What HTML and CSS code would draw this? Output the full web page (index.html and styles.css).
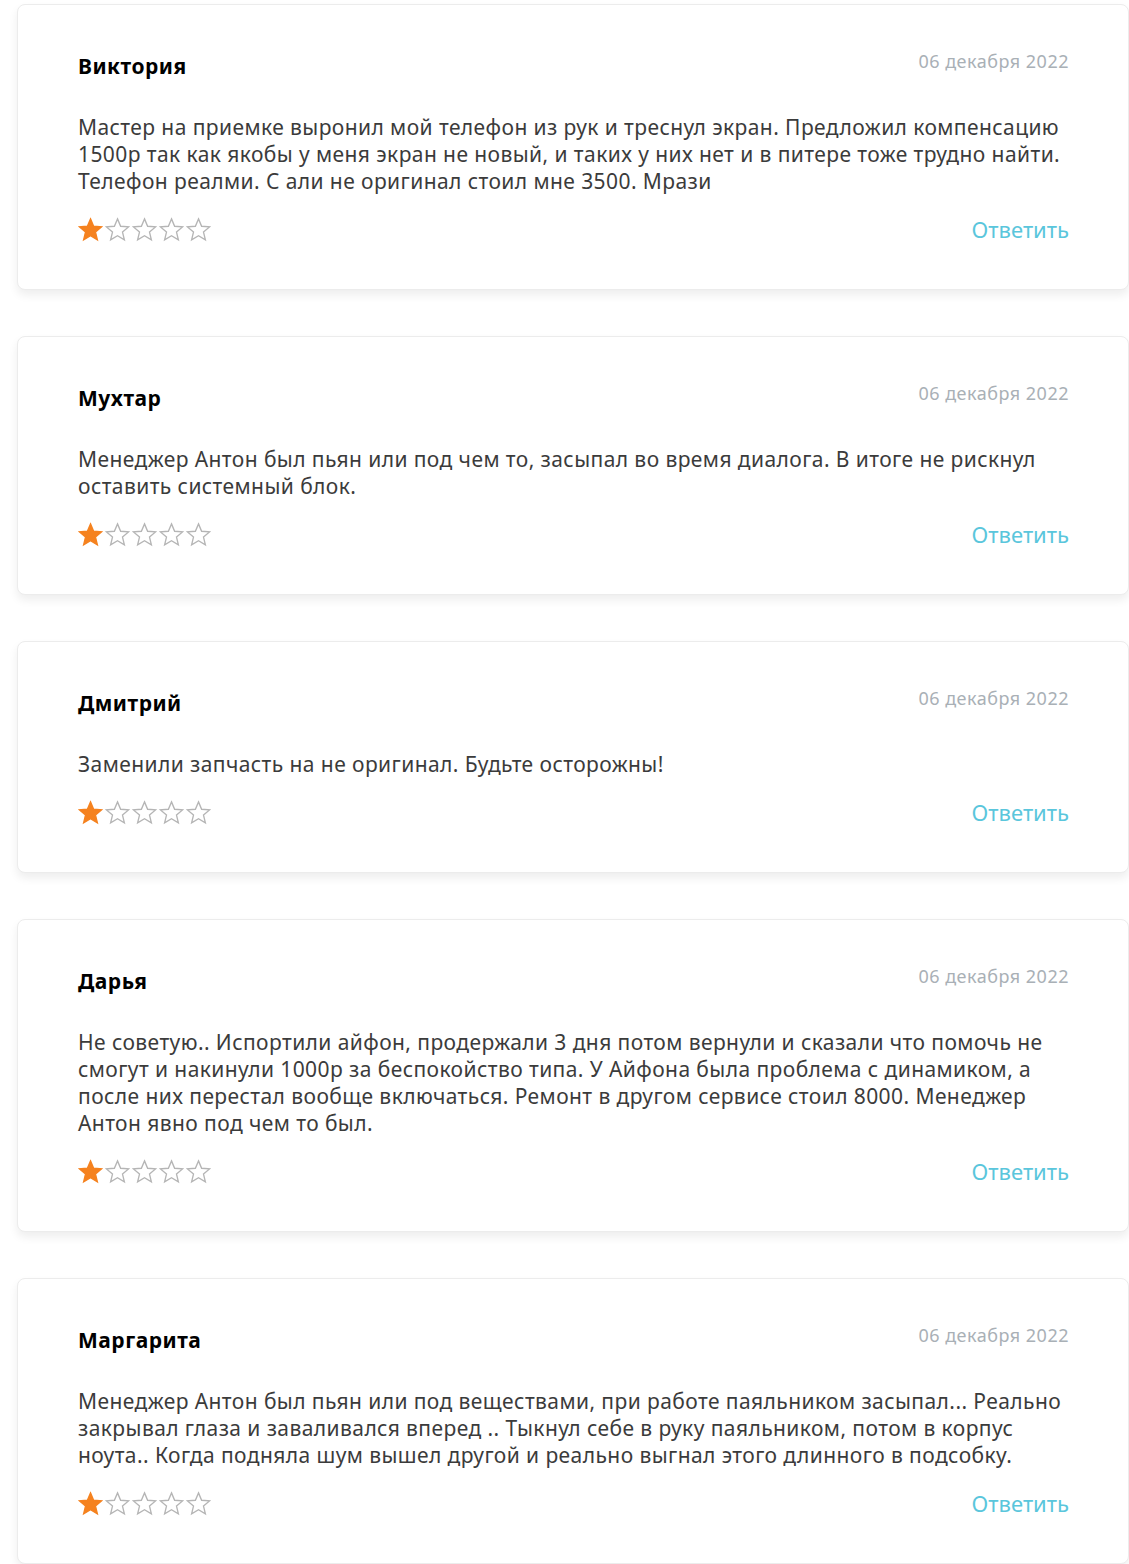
FILE: index.html
```html
<!DOCTYPE html>
<html lang="ru">
<head>
<meta charset="utf-8">
<title>Отзывы</title>
<link rel="stylesheet" href="styles.css">
</head>
<body>
<svg width="0" height="0" class="defs" aria-hidden="true">
  <defs>
    <symbol id="star" viewBox="0 0 24 24">
      <path d="M12 1.8l3 7.1 7.6.6-5.8 5 1.8 7.5L12 18l-6.6 4 1.8-7.5-5.8-5 7.6-.6z"/>
    </symbol>
  </defs>
</svg>
<div class="reviews">
  <article class="review">
    <div class="review-head"><span class="name">Виктория</span><span class="date">06 декабря 2022</span></div>
    <p class="text">Мастер на приемке выронил мой телефон из рук и треснул экран. Предложил компенсацию 1500р так как якобы у меня экран не новый, и таких у них нет и в питере тоже трудно найти. Телефон реалми. С али не оригинал стоил мне 3500. Мрази</p>
    <div class="review-foot">
      <div class="stars"><svg class="star on"><use href="#star"/></svg><svg class="star"><use href="#star"/></svg><svg class="star"><use href="#star"/></svg><svg class="star"><use href="#star"/></svg><svg class="star"><use href="#star"/></svg></div>
      <a class="reply" href="#">Ответить</a>
    </div>
  </article>
  <article class="review">
    <div class="review-head"><span class="name">Мухтар</span><span class="date">06 декабря 2022</span></div>
    <p class="text">Менеджер Антон был пьян или под чем то, засыпал во время диалога. В итоге не рискнул оставить системный блок.</p>
    <div class="review-foot">
      <div class="stars"><svg class="star on"><use href="#star"/></svg><svg class="star"><use href="#star"/></svg><svg class="star"><use href="#star"/></svg><svg class="star"><use href="#star"/></svg><svg class="star"><use href="#star"/></svg></div>
      <a class="reply" href="#">Ответить</a>
    </div>
  </article>
  <article class="review">
    <div class="review-head"><span class="name">Дмитрий</span><span class="date">06 декабря 2022</span></div>
    <p class="text">Заменили запчасть на не оригинал. Будьте осторожны!</p>
    <div class="review-foot">
      <div class="stars"><svg class="star on"><use href="#star"/></svg><svg class="star"><use href="#star"/></svg><svg class="star"><use href="#star"/></svg><svg class="star"><use href="#star"/></svg><svg class="star"><use href="#star"/></svg></div>
      <a class="reply" href="#">Ответить</a>
    </div>
  </article>
  <article class="review">
    <div class="review-head"><span class="name">Дарья</span><span class="date">06 декабря 2022</span></div>
    <p class="text">Не советую.. Испортили айфон, продержали 3 дня потом вернули и сказали что помочь не смогут и накинули 1000р за беспокойство типа. У Айфона была проблема с динамиком, а после них перестал вообще включаться. Ремонт в другом сервисе стоил 8000. Менеджер Антон явно под чем то был.</p>
    <div class="review-foot">
      <div class="stars"><svg class="star on"><use href="#star"/></svg><svg class="star"><use href="#star"/></svg><svg class="star"><use href="#star"/></svg><svg class="star"><use href="#star"/></svg><svg class="star"><use href="#star"/></svg></div>
      <a class="reply" href="#">Ответить</a>
    </div>
  </article>
  <article class="review">
    <div class="review-head"><span class="name">Маргарита</span><span class="date">06 декабря 2022</span></div>
    <p class="text">Менеджер Антон был пьян или под веществами, при работе паяльником засыпал... Реально закрывал глаза и заваливался вперед .. Тыкнул себе в руку паяльником, потом в корпус ноута.. Когда подняла шум вышел другой и реально выгнал этого длинного в подсобку.</p>
    <div class="review-foot">
      <div class="stars"><svg class="star on"><use href="#star"/></svg><svg class="star"><use href="#star"/></svg><svg class="star"><use href="#star"/></svg><svg class="star"><use href="#star"/></svg><svg class="star"><use href="#star"/></svg></div>
      <a class="reply" href="#">Ответить</a>
    </div>
  </article>
</div>
</body>
</html>
```
FILE: styles.css
```css
html, body {
  margin: 0;
  padding: 0;
  background: #fff;
  overflow: hidden;
}
body {
  font-family: "Noto Sans", "Open Sans", sans-serif;
  color: #3a3a3a;
}
.defs {
  position: absolute;
  width: 0;
  height: 0;
}
.reviews {
  display: flex;
  flex-direction: column;
  gap: 46px;
  padding: 4px 0 40px 17px;
}
.review {
  width: 1112px;
  box-sizing: border-box;
  background: #fff;
  border: 1px solid #ececec;
  border-radius: 8px;
  box-shadow: 0 5px 10px rgba(0, 0, 0, 0.07);
  padding: 44px 59px 46px 60px;
}
.review-head {
  display: flex;
  justify-content: space-between;
  align-items: flex-start;
}
.name {
  font-weight: 700;
  font-size: 21px;
  letter-spacing: 0.5px;
  line-height: 24px;
  color: #000;
  padding-top: 5px;
}
.date {
  font-size: 18px;
  letter-spacing: 0.5px;
  line-height: 24px;
  color: #a9b0b6;
}
.text {
  margin: 36px 0 0;
  font-size: 21px;
  letter-spacing: 0.42px;
  line-height: 27px;
  color: #3b3b3b;
}
.review-foot {
  margin-top: 20px;
  display: flex;
  justify-content: space-between;
  align-items: center;
  height: 28px;
}
.stars {
  display: flex;
  gap: 2px;
}
.star {
  width: 25px;
  height: 25px;
  fill: #fff;
  stroke: #b5b5b5;
  stroke-width: 1.3;
}
.star.on {
  fill: #f5821f;
  stroke: #f5821f;
}
.reply {
  font-size: 22px;
  line-height: 28px;
  color: #5ac6dc;
  text-decoration: none;
}
```
